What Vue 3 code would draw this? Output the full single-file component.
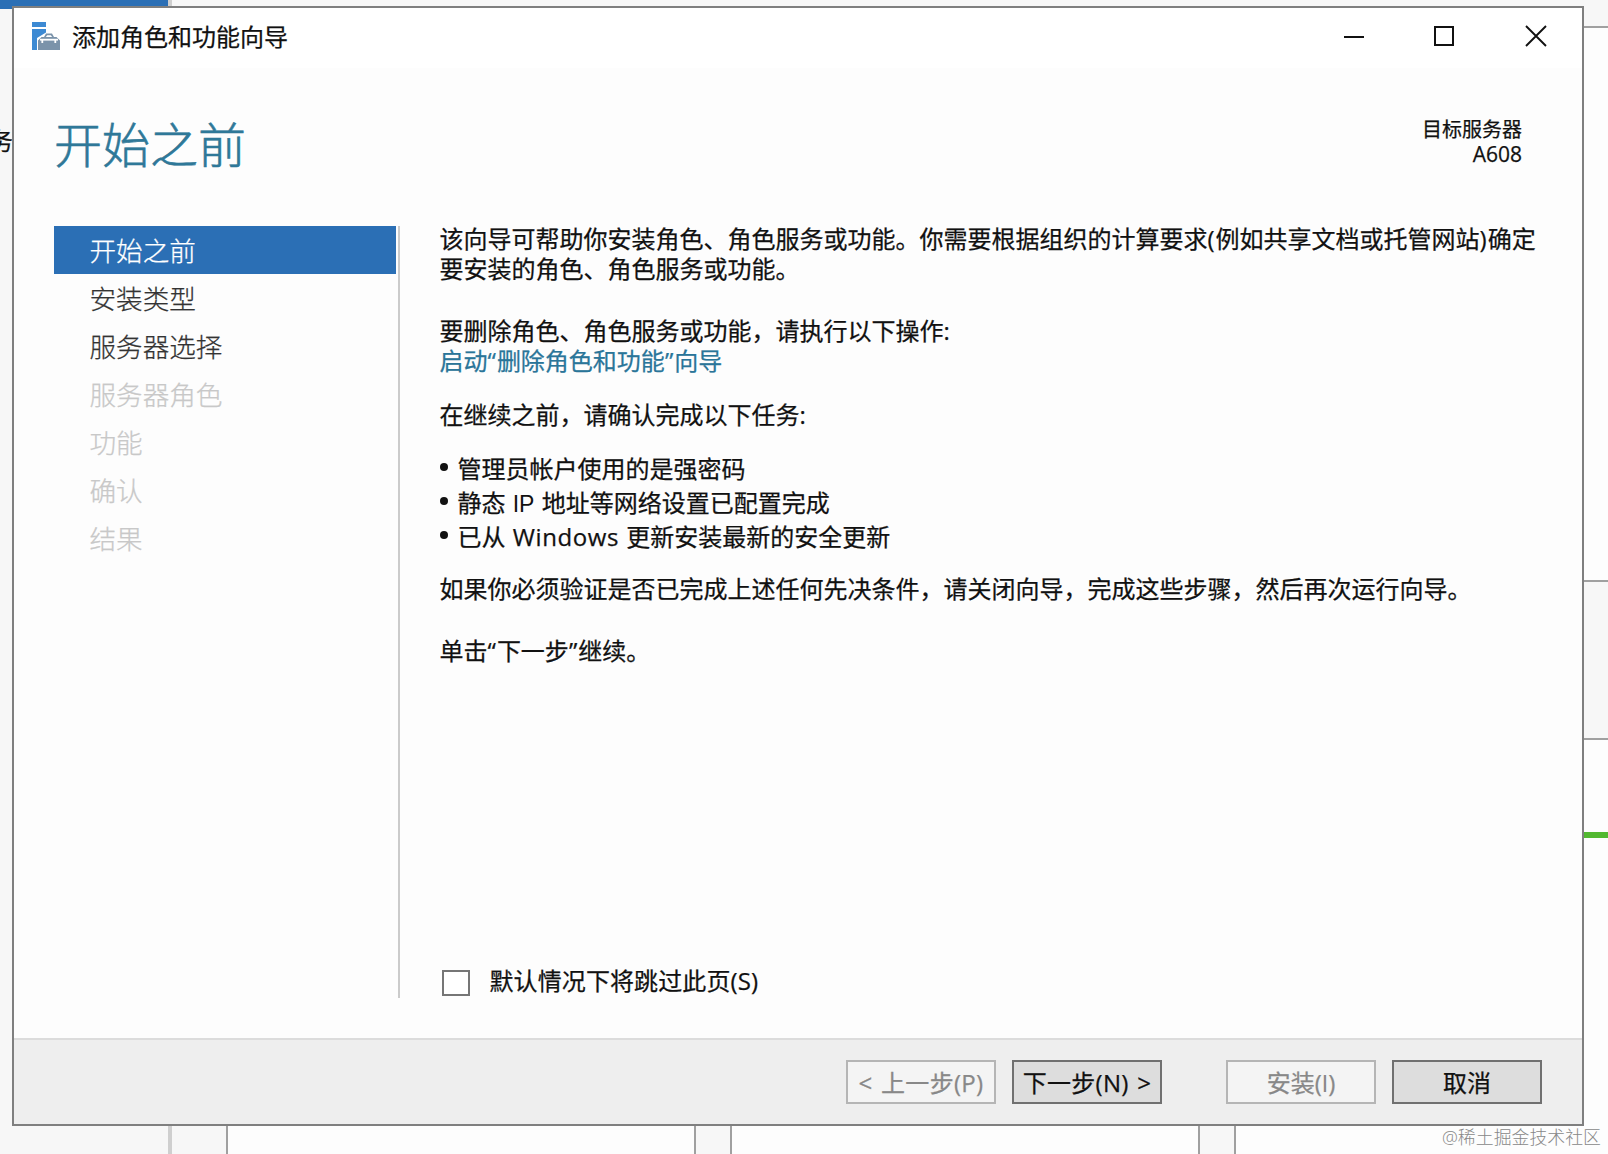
<script setup>
import { ref } from 'vue';

const steps = [
  { title: '开始之前', state: 'active' },
  { title: '安装类型', state: 'ready' },
  { title: '服务器选择', state: 'ready' },
  { title: '服务器角色', state: 'disabled' },
  { title: '功能', state: 'disabled' },
  { title: '确认', state: 'disabled' },
  { title: '结果', state: 'disabled' }
];

const skipPage = ref(false);
</script>

<template>
  <div class="desktop">
    <!-- 后方的服务器管理器窗口 -->
    <div class="behind-top">
      <div class="blue-bar"></div>
      <div class="splitter"></div>
    </div>
    <div class="behind-left"><span class="clipped">务</span></div>

    <!-- 向导窗口 -->
    <div class="wizard">
      <div class="title-bar">
        <svg class="app-icon" width="30" height="30" viewBox="0 0 30 30">
          <path d="M1 1h14v5H1z" fill="#3d8ad3" />
          <path d="M1 8h14v3.5L6 17v12H1z" fill="#3d8ad3" />
          <path d="M7 29V19.5L10.5 16H13l2-3.5h6l2 3.5h2.500L29 19.5V29z" fill="#7b93aa" />
          <path d="M14.8 16 16.2 14.2h3.6l1.4 1.8z" fill="#fff" />
          <path d="M9 18.7h18" stroke="#fff" stroke-width="1.8" />
          <path d="M11.3 19v3M24.3 19v3" stroke="#fff" stroke-width="1.8" />
        </svg>
        <span class="title-text">添加角色和功能向导</span>
        <svg class="win-buttons" width="210" height="24" viewBox="0 0 210 24">
          <path d="M2 13h20" stroke="#111" stroke-width="2" />
          <path d="M93 3h18v18H93z" fill="none" stroke="#111" stroke-width="2" />
          <path d="M184 2l20 20M204 2l-20 20" stroke="#111" stroke-width="1.9" />
        </svg>
      </div>

      <div class="header">
        <h1 class="page-title">开始之前</h1>
        <div class="target">
          <div>目标服务器</div>
          <div class="server-name">A608</div>
        </div>
      </div>

      <div class="main">
        <nav class="steps">
          <div v-for="step in steps" :key="step.title" class="step" :class="step.state">
            {{ step.title }}
          </div>
        </nav>

        <div class="content">
          <p class="intro">
            该向导可帮助你安装角色、角色服务或功能。你需要根据组织的计算要求<span class="paren">(</span>例如共享文档或托管网站<span class="paren">)</span>确定<br />要安装的角色、角色服务或功能。
          </p>
          <p class="remove">
            要删除角色、角色服务或功能，请执行以下操作:<br /><a class="link">启动<span class="paren">“</span>删除角色和功能<span class="paren">”</span>向导</a>
          </p>
          <p class="before">在继续之前，请确认完成以下任务:</p>
          <ul class="tasks">
            <li>管理员帐户使用的是强密码</li>
            <li>静态 <span class="plain">IP</span> 地址等网络设置已配置完成</li>
            <li>已从 <span class="product">Windows</span> 更新安装最新的安全更新</li>
          </ul>
          <p class="verify">如果你必须验证是否已完成上述任何先决条件，请关闭向导，完成这些步骤，然后再次运行向导。</p>
          <p class="next-hint">单击<span class="paren">“</span>下一步<span class="paren">”</span>继续。</p>

          <div class="skip" @click="skipPage = !skipPage">
            <span class="checkbox" :class="{ checked: skipPage }"></span>
            <span class="skip-label">默认情况下将跳过此页(S)</span>
          </div>
        </div>
      </div>

      <div class="footer">
        <button class="btn nav-btn" disabled>&lt; 上一步(P)</button>
        <button class="btn nav-btn">下一步(N) &gt;</button>
        <button class="btn install" disabled>安装(<span class="plain">I</span>)</button>
        <button class="btn">取消</button>
      </div>
    </div>

    <div class="behind-right">
      <div class="toolbar-part"></div>
      <div class="tile-part"></div>
      <div class="gap-part"></div>
      <div class="tile-tail"></div>
      <div class="green-bar"></div>
    </div>

    <div class="behind-bottom">
      <div class="side-part"></div>
      <div class="splitter"></div>
      <div class="gutter first"></div>
      <div class="tile"></div>
      <div class="gutter"></div>
      <div class="tile"></div>
      <div class="gutter"></div>
      <div class="watermark">@稀土掘金技术社区</div>
    </div>
  </div>
</template>

<style>
body {
  margin: 0;
  overflow: hidden;
}
</style>

<style scoped>
.desktop {
  display: grid;
  grid-template-columns: 12px 1572px 24px;
  grid-template-rows: 6px 1120px 28px;
  width: 1608px;
  height: 1154px;
  overflow: hidden;
  background: #f7f7f7;
  font-family: 'Open Sans', 'Noto Sans CJK SC', sans-serif;
  font-size: 24px;
  color: #111;
  -webkit-text-stroke: 0.25px;
}

.behind-top {
  grid-column: 1 / 4;
  display: flex;
}

.blue-bar {
  width: 168px;
  background: #2b6fb5;
}

.splitter {
  width: 4px;
  background: #cfcfcf;
}

.behind-left {
  display: flex;
  justify-content: flex-end;
  border-top: 3px solid #2b6fb5;
  overflow: hidden;
}

.clipped {
  margin-top: 115px;
  margin-right: -1px;
  line-height: 34px;
}

.wizard {
  box-sizing: border-box;
  display: flex;
  flex-direction: column;
  min-width: 0;
  border: 2px solid #7f7f7f;
  background: #fdfdfd;
}

.title-bar {
  display: flex;
  align-items: center;
  height: 60px;
  padding-left: 17px;
  padding-right: 30px;
  background: #fff;
}

.app-icon {
  margin-top: -4px;
}

.title-text {
  flex: 1;
  margin-left: 11px;
  margin-bottom: 2px;
  line-height: 56px;
}

.win-buttons {
  margin-top: -4px;
}

.header {
  display: flex;
  justify-content: space-between;
  height: 158px;
  padding: 0 60px 0 40px;
}

.page-title {
  margin: 42px 0 0;
  font-size: 48px;
  font-weight: 300;
  line-height: 70px;
  color: #2f7898;
  -webkit-text-stroke: 0.6px;
}

.target {
  margin-top: 49px;
  font-size: 20px;
  line-height: 25px;
  text-align: right;
}

.server-name {
  font-size: 21px;
}

.main {
  flex: 1;
  display: flex;
  padding-left: 40px;
}

.steps {
  box-sizing: border-box;
  width: 346px;
  height: 772px;
  padding-right: 2px;
  border-right: 2px solid #cbcbcb;
}

.step {
  height: 48px;
  padding-left: 35.5px;
  font-size: 26.6px;
  font-weight: 300;
  line-height: 51px;
  color: #333;
  -webkit-text-stroke: 0.25px;
}

.step.active {
  color: #fff;
  background: #2b6fb5;
}

.step.disabled {
  color: #c8c8c8;
}

.content {
  flex: 1;
  display: flex;
  flex-direction: column;
  height: 772px;
  padding-left: 39.5px;
  white-space: nowrap;
  line-height: 30px;
}

.content p {
  margin: 0;
}

.content .intro {
  margin-top: -2px;
}

.content .remove {
  margin-top: 32px;
}

.paren {
  letter-spacing: 1px;
}

.link {
  color: #2a7599;
}

.content .before {
  margin-top: 24px;
}

.tasks {
  margin: 22px 0 20px;
  padding: 0;
  list-style: none;
  line-height: 34px;
}

.tasks li {
  height: 34px;
  word-spacing: 1px;
}

.tasks li::before {
  content: '';
  display: inline-block;
  width: 8px;
  height: 8px;
  margin: 0 10px 7px 0;
  border-radius: 50%;
  background: #111;
  vertical-align: baseline;
}

.plain {
  font-family: 'Liberation Sans', sans-serif;
  font-size: 23px;
  line-height: 1;
  -webkit-text-stroke: 0;
}

.product {
  letter-spacing: 0.6px;
}

.content .next-hint {
  margin-top: 32px;
}

.skip {
  display: flex;
  align-items: center;
  height: 30px;
  margin-top: auto;
}

.skip-label {
  margin-bottom: 4px;
  letter-spacing: 0.1px;
}

.checkbox {
  box-sizing: border-box;
  width: 28px;
  height: 26px;
  margin: 0 20px 0 2px;
  border: 2px solid #767676;
  background: #fff;
}

.checkbox.checked {
  background: #2b6fb5;
}

.footer {
  box-sizing: border-box;
  display: flex;
  justify-content: flex-end;
  gap: 16px;
  height: 86px;
  padding: 20px 40px 0 0;
  border-top: 2px solid #dcdcdc;
  background: #eee;
}

.btn {
  box-sizing: border-box;
  width: 150px;
  height: 44px;
  padding: 2px 0 0;
  border: 2px solid #707070;
  background: #ddd;
  font: inherit;
  line-height: 38px;
  color: #111;
  white-space: nowrap;
}

.nav-btn {
  word-spacing: 2px;
  letter-spacing: 0.3px;
}

.btn:disabled {
  border-color: #b5b5b5;
  background: #f4f4f4;
  color: #888;
}

.btn.install {
  margin-left: 48px;
}

.behind-right {
  display: flex;
  flex-direction: column;
  background: #fdfdfd;
}

.toolbar-part {
  height: 20px;
  border-bottom: 2px solid #a0a0a0;
  background: #f7f7f7;
}

.tile-part {
  height: 552px;
}

.gap-part {
  height: 156px;
  border-top: 2px solid #a0a0a0;
  border-bottom: 2px solid #a0a0a0;
  background: #f7f7f7;
}

.tile-tail {
  height: 92px;
}

.green-bar {
  height: 6px;
  background: #52b830;
}

.behind-bottom {
  grid-column: 1 / 4;
  display: flex;
  background: #fdfdfd;
}

.side-part {
  width: 168px;
  background: #f7f7f7;
}

.gutter {
  box-sizing: border-box;
  width: 38px;
  border-left: 2px solid #a0a0a0;
  border-right: 2px solid #a0a0a0;
  background: #f7f7f7;
}

.gutter.first {
  width: 56px;
  border-left: none;
}

.tile {
  width: 466px;
}

.watermark {
  margin-left: auto;
  padding-right: 7px;
  font-size: 17.9px;
  font-weight: 300;
  line-height: 23px;
  color: #888;
  white-space: nowrap;
  -webkit-text-stroke: 0;
}
</style>
